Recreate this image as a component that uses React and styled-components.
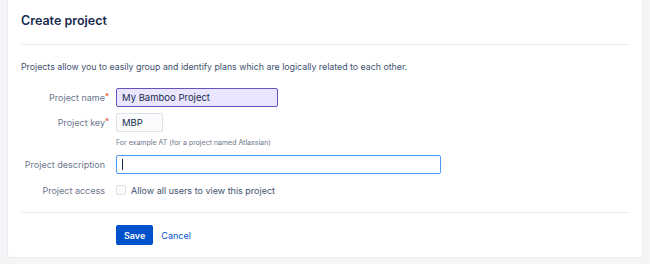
import styled, { createGlobalStyle } from "styled-components";

const GlobalStyle = createGlobalStyle`
  html, body {
    margin: 0;
    padding: 0;
    background: #f4f5f7;
    font-family: Inter, "Noto Sans", sans-serif;
  }
`;

const Page = styled.div`
  width: 650px;
  height: 264px;
  padding: 0 7px 6px 7px;
  box-sizing: border-box;
`;

const Card = styled.div`
  background: #fff;
  height: 258px;
  box-sizing: border-box;
  padding: 0 13px;
  border: 1px solid #ebecf0;
  border-top: none;
  border-radius: 0 0 3px 3px;
`;

const Title = styled.h1`
  margin: 0;
  box-sizing: border-box;
  height: 45px;
  padding-top: 12px;
  line-height: 18px;
  font-size: 12.5px;
  font-weight: 600;
  color: #172b4d;
  border-bottom: 1px solid #ebecf0;
`;

const Intro = styled.p`
  margin: 0;
  padding: 15px 0 0;
  font-size: 8.8px;
  line-height: 14px;
  color: #42526e;
`;

const Form = styled.div`
  display: grid;
  grid-template-columns: 95px 1fr;
  align-items: center;
  padding-top: 14px;
  row-gap: 6px;
`;

const Label = styled.label`
  position: relative;
  text-align: right;
  padding-right: 11px;
  font-size: 9px;
  color: #6b778c;
`;

const Req = styled.span`
  position: absolute;
  right: 7px;
  top: -1px;
  color: #de350b;
  font-size: 8px;
`;

const Input = styled.div`
  box-sizing: border-box;
  width: ${(p) => p.w}px;
  height: 19px;
  border: 1px solid ${(p) => p.border};
  background: ${(p) => p.bg};
  border-radius: 2px;
  padding: 0 5px;
  display: flex;
  align-items: center;
  font-size: 9.5px;
  color: #172b4d;
`;

const Caret = styled.span`
  width: 1px;
  height: 11px;
  background: #172b4d;
`;

const Help = styled.div`
  grid-column: 2;
  font-size: 7px;
  line-height: 9px;
  color: #6b778c;
  margin-bottom: 2px;
`;

const Check = styled.div`
  display: flex;
  align-items: center;
  gap: 5px;
  font-size: 9px;
  color: #42526e;
  height: 20px;
`;

const Box = styled.span`
  width: 8px;
  height: 8px;
  border: 1px solid #dfe1e6;
  border-radius: 2px;
  background: #fafbfc;
`;

const Divider = styled.div`
  border-top: 1px solid #ebecf0;
  margin-top: 12px;
`;

const Actions = styled.div`
  display: flex;
  align-items: center;
  gap: 8px;
  padding: 12px 0 0 95px;
`;

const SaveButton = styled.button`
  height: 20px;
  padding: 0 8px;
  border: none;
  border-radius: 2px;
  background: #0052cc;
  color: #fff;
  font-family: inherit;
  font-size: 9px;
  font-weight: 600;
`;

const CancelLink = styled.a`
  font-size: 9px;
  color: #0052cc;
`;

export default function App() {
  return (
    <Page>
      <GlobalStyle />
      <Card>
        <Title>Create project</Title>
        <Intro>
          Projects allow you to easily group and identify plans which are logically related to each other.
        </Intro>
        <Form>
          <Label>
            Project name<Req>*</Req>
          </Label>
          <Input w={162} bg="#eae6ff" border="#6554c0">
            My Bamboo Project
          </Input>
          <Label>
            Project key<Req>*</Req>
          </Label>
          <Input w={47} bg="#fafbfc" border="#dfe1e6">
            MBP
          </Input>
          <Help>For example AT (for a project named Atlassian)</Help>
          <Label>Project description</Label>
          <Input w={325} bg="#fff" border="#4c9aff">
            <Caret />
          </Input>
          <Label>Project access</Label>
          <Check>
            <Box />
            Allow all users to view this project
          </Check>
        </Form>
        <Divider />
        <Actions>
          <SaveButton>Save</SaveButton>
          <CancelLink>Cancel</CancelLink>
        </Actions>
      </Card>
    </Page>
  );
}
